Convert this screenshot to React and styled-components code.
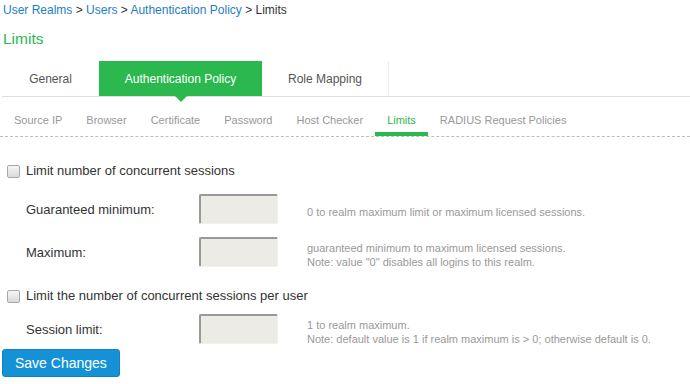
import React from "react";
import styled, { createGlobalStyle } from "styled-components";

const Global = createGlobalStyle`
  body {
    margin: 0;
    background: #fff;
    font-family: "Liberation Sans", Arial, sans-serif;
    color: #333;
  }
`;

const Page = styled.div`
  padding: 3px 0 0 2px;
`;

const Crumbs = styled.div`
  padding-left: 1px;
  font-size: 12px;
  line-height: 14px;
  color: #333;
  a {
    color: #1f7dc1;
    text-decoration: none;
  }
`;

const Title = styled.h1`
  margin: 12px 0 12px 1px;
  font-size: 15.5px;
  line-height: 20px;
  font-weight: normal;
  color: #2db84d;
`;

const Tabs = styled.div`
  display: flex;
  height: 35px;
  border-bottom: 1px solid #dddddd;
`;

const Tab = styled.div`
  position: relative;
  display: flex;
  align-items: center;
  justify-content: center;
  width: ${(p) => p.$w}px;
  font-size: 12px;
  color: ${(p) => (p.$active ? "#fff" : "#555")};
  background: ${(p) => (p.$active ? "#2bb84f" : "transparent")};
  border-right: ${(p) => (p.$last ? "1px solid #ececec" : "none")};
  &::after {
    content: "";
    display: ${(p) => (p.$active ? "block" : "none")};
    position: absolute;
    left: 50%;
    bottom: -6px;
    margin-left: -6px;
    border-left: 6px solid transparent;
    border-right: 6px solid transparent;
    border-top: 6px solid #2bb84f;
  }
`;

const SubTabs = styled.div`
  display: flex;
  border-bottom: 1px dashed #bdbdbd;
  margin-left: -2px;
  padding-left: 2px;
`;

const SubTab = styled.div`
  padding: 16px 12px 5px;
  font-size: 11px;
  line-height: 14px;
  color: ${(p) => (p.$active ? "#2bb84d" : "#999")};
  border-bottom: 4px solid ${(p) => (p.$active ? "#2bb84f" : "transparent")};
`;

const Form = styled.div`
  padding-left: 1px;
`;

const CheckRow = styled.label`
  display: flex;
  align-items: center;
  margin-top: ${(p) => p.$top}px;
  font-size: 13px;
  line-height: 16px;
  color: #333;
`;

const Box = styled.input`
  appearance: none;
  width: 13px;
  height: 13px;
  margin: 0 6px 0 4px;
  border: 1px solid #a8a8a8;
  border-radius: 2px;
  background: linear-gradient(#f6f6f6, #dadada);
`;

const Field = styled.div`
  display: flex;
  align-items: center;
  margin-top: ${(p) => p.$top}px;
  padding-left: 23px;
`;

const Label = styled.div`
  width: 173px;
  font-size: 13px;
  color: #333;
`;

const Input = styled.input`
  box-sizing: border-box;
  width: 79px;
  height: 30px;
  margin: 0;
  padding: 0 4px;
  background: #ecebe5;
  border-top: 2px solid #999;
  border-left: 2px solid #999;
  border-right: 1px solid #f0f0ee;
  border-bottom: 1px solid #f0f0ee;
  border-radius: 2px;
  outline: none;
`;

const Help = styled.div`
  margin: 3px 0 -3px 29px;
  font-size: 11px;
  line-height: 14px;
  color: #999;
`;

const Button = styled.button`
  margin-top: 5px;
  height: 28px;
  padding: 0 12px;
  font-family: "Liberation Sans", Arial, sans-serif;
  font-size: 14px;
  color: #fff;
  background: #1592d6;
  border: 1px solid #1083c4;
  border-radius: 3px;
`;

export default function App() {
  return (
    <Page>
      <Global />
      <Crumbs>
        <a href="#">User Realms</a> &gt; <a href="#">Users</a> &gt;{" "}
        <a href="#">Authentication Policy</a> &gt; Limits
      </Crumbs>
      <Title>Limits</Title>
      <Tabs>
        <Tab $w={97}>General</Tab>
        <Tab $w={163} $active>
          Authentication Policy
        </Tab>
        <Tab $w={126} $last>
          Role Mapping
        </Tab>
      </Tabs>
      <SubTabs>
        {["Source IP", "Browser", "Certificate", "Password", "Host Checker", "Limits", "RADIUS Request Policies"].map(
          (t) => (
            <SubTab key={t} $active={t === "Limits"}>
              {t}
            </SubTab>
          )
        )}
      </SubTabs>
      <Form>
        <CheckRow $top={26}>
          <Box type="checkbox" />
          Limit number of concurrent sessions
        </CheckRow>
        <Field $top={15}>
          <Label>Guaranteed minimum:</Label>
          <Input />
          <Help>0 to realm maximum limit or maximum licensed sessions.</Help>
        </Field>
        <Field $top={13}>
          <Label>Maximum:</Label>
          <Input />
          <Help>
            guaranteed minimum to maximum licensed sessions.
            <br />
            Note: value "0" disables all logins to this realm.
          </Help>
        </Field>
        <CheckRow $top={21}>
          <Box type="checkbox" />
          Limit the number of concurrent sessions per user
        </CheckRow>
        <Field $top={10}>
          <Label>Session limit:</Label>
          <Input />
          <Help>
            1 to realm maximum.
            <br />
            Note: default value is 1 if realm maximum is &gt; 0; otherwise default is 0.
          </Help>
        </Field>
      </Form>
      <Button>Save Changes</Button>
    </Page>
  );
}
